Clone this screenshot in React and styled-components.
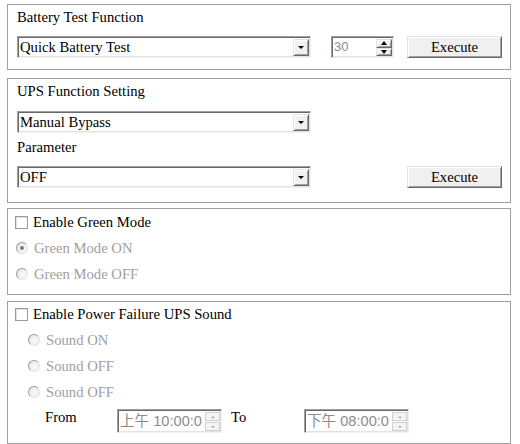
import React from "react";
import styled, { createGlobalStyle } from "styled-components";

const GlobalStyle = createGlobalStyle`
  body {
    margin: 0;
    background: #ffffff;
    font-family: "Liberation Serif", "Times New Roman", serif;
    font-size: 11pt;
    color: #000;
  }
`;

const Page = styled.div`
  width: 504px;
  padding: 4px 0 0 7px;
  display: flex;
  flex-direction: column;
`;

const Panel = styled.div`
  box-sizing: border-box;
  border: 1px solid #a0a0a0;
  margin-top: ${(p) => p.$top || 0}px;
  padding: 0 8px ${(p) => p.$bottom || 0}px ${(p) => p.$left || 9}px;
  display: flex;
  flex-direction: column;
`;

const Title = styled.div`
  height: 24px;
  line-height: 24px;
  margin-bottom: ${(p) => p.$after || 0}px;
  margin-top: ${(p) => p.$before || 0}px;
`;

const Row = styled.div`
  display: flex;
  align-items: center;
  height: 22px;
  justify-content: ${(p) => (p.$spread ? "space-between" : "flex-start")};
`;

const Sunken = styled.div`
  box-sizing: border-box;
  display: flex;
  align-items: stretch;
  border: 1px solid;
  border-color: #a0a0a0 #f0f0f0 #f0f0f0 #a0a0a0;
  box-shadow: inset 1px 1px #696969, inset -1px -1px #e3e3e3;
  background: #fff;
`;

const SelectBox = styled(Sunken)`
  width: 294px;
  height: 22px;
`;

const SelectText = styled.div`
  flex: 1;
  padding-left: 2px;
  line-height: 20px;
  white-space: nowrap;
`;

const RaisedButton = styled.div`
  box-sizing: border-box;
  display: flex;
  align-items: center;
  justify-content: center;
  background: #f0f0f0;
  border: 1px solid;
  border-color: #e3e3e3 #696969 #696969 #e3e3e3;
  box-shadow: inset 1px 1px #ffffff, inset -1px -1px #a0a0a0;
`;

const ArrowButton = styled(RaisedButton)`
  width: 16px;
  margin: 2px 1px 1px 0;
`;

const Triangle = styled.span`
  width: 0;
  height: 0;
  border-left: ${(p) => p.$size || 3}px solid transparent;
  border-right: ${(p) => p.$size || 3}px solid transparent;
  ${(p) => (p.$up ? "border-bottom" : "border-top")}: ${(p) => (p.$size || 3) + 0.5}px solid
    ${(p) => p.$color || "#000"};
`;

const NumberBox = styled(Sunken)`
  width: 63px;
  height: 22px;
  margin-left: 20px;
`;

const ValueText = styled.div`
  flex: 1;
  padding-left: 2px;
  font-family: "Liberation Sans", Arial, "Noto Sans CJK TC", sans-serif;
  font-size: ${(p) => p.$size || 13}px;
  line-height: ${(p) => p.$line || 20}px;
  color: #8c8c8c;
  white-space: nowrap;
  overflow: hidden;
`;

const SpinColumn = styled.div`
  width: ${(p) => p.$width || 16}px;
  margin: 2px 1px 1px 0;
  display: flex;
  flex-direction: column;
  gap: ${(p) => p.$gap || 0}px;
`;

const SpinButton = styled(RaisedButton)`
  flex: 1;
`;

const FaintSpin = styled.div`
  flex: 1;
  box-sizing: border-box;
  display: flex;
  align-items: center;
  justify-content: center;
  background: #f4f4f4;
  border: 1px solid #d0d0d0;
`;

const ExecuteButton = styled(RaisedButton)`
  width: 95px;
  height: 22px;
  margin-left: ${(p) => p.$left || 0}px;
`;

const CheckRow = styled.div`
  display: flex;
  align-items: center;
  height: ${(p) => p.$height || 26}px;
  padding-left: ${(p) => p.$indent || 0}px;
  color: ${(p) => (p.$disabled ? "#a0a0a0" : "#000")};
`;

const CheckBox = styled.span`
  box-sizing: border-box;
  width: 13px;
  height: 13px;
  margin-right: 5px;
  border: 1px solid #9a9a9a;
  background: #fff;
  box-shadow: inset 1px 1px #e0e0e0;
`;

const Radio = styled.span`
  box-sizing: border-box;
  position: relative;
  width: 12px;
  height: 12px;
  margin: 0 6px 0 1px;
  border-radius: 50%;
  border: 1px solid;
  border-color: #9c9c9c #e4e4e4 #e4e4e4 #9c9c9c;
  background: radial-gradient(circle at 60% 60%, #fbfbfb 0, #e8e8e8 75%);

  &::after {
    content: "";
    display: ${(p) => (p.$checked ? "block" : "none")};
    position: absolute;
    left: 3px;
    top: 3px;
    width: 4px;
    height: 4px;
    border-radius: 50%;
    background: #7a7a7a;
  }
`;

const TimeRow = styled.div`
  display: flex;
  align-items: flex-start;
  padding-left: 30px;
`;

const TimeLabel = styled.div`
  width: ${(p) => p.$width}px;
  margin-left: ${(p) => p.$left || 0}px;
  line-height: 24px;
`;

const TimeBox = styled(Sunken)`
  width: 105px;
  height: 24px;
  margin-top: 4px;
`;

const TimeField = ({ value }) => (
  <TimeBox>
    <ValueText $size={14.6} $line={22}>
      {value}
    </ValueText>
    <SpinColumn $width={15} $gap={1}>
      <FaintSpin>
        <Triangle $up $size={2} $color="#a8a8a8" />
      </FaintSpin>
      <FaintSpin>
        <Triangle $size={2} $color="#a8a8a8" />
      </FaintSpin>
    </SpinColumn>
  </TimeBox>
);

const Select = ({ value }) => (
  <SelectBox>
    <SelectText>{value}</SelectText>
    <ArrowButton>
      <Triangle />
    </ArrowButton>
  </SelectBox>
);

const App = () => {
  return (
    <>
      <GlobalStyle />
      <Page>
        <Panel $bottom={11}>
          <Title $after={7}>Battery Test Function</Title>
          <Row>
            <Select value="Quick Battery Test" />
            <NumberBox>
              <ValueText>30</ValueText>
              <SpinColumn>
                <SpinButton>
                  <Triangle $up $size={3.5} />
                </SpinButton>
                <SpinButton>
                  <Triangle $size={3.5} />
                </SpinButton>
              </SpinColumn>
            </NumberBox>
            <ExecuteButton $left={13}>Execute</ExecuteButton>
          </Row>
        </Panel>

        <Panel $top={8} $bottom={14}>
          <Title $after={8}>UPS Function Setting</Title>
          <Row>
            <Select value="Manual Bypass" />
          </Row>
          <Title $before={2} $after={7}>
            Parameter
          </Title>
          <Row $spread>
            <Select value="OFF" />
            <ExecuteButton>Execute</ExecuteButton>
          </Row>
        </Panel>

        <Panel $top={5} $bottom={7} $left={7}>
          <CheckRow>
            <CheckBox />
            Enable Green Mode
          </CheckRow>
          <CheckRow $disabled>
            <Radio $checked />
            Green Mode ON
          </CheckRow>
          <CheckRow $disabled>
            <Radio />
            Green Mode OFF
          </CheckRow>
        </Panel>

        <Panel $top={6} $bottom={10} $left={7}>
          <CheckRow $height={25}>
            <CheckBox />
            Enable Power Failure UPS Sound
          </CheckRow>
          <CheckRow $disabled $indent={12}>
            <Radio />
            Sound ON
          </CheckRow>
          <CheckRow $disabled $indent={12}>
            <Radio />
            Sound OFF
          </CheckRow>
          <CheckRow $disabled $indent={12}>
            <Radio />
            Sound OFF
          </CheckRow>
          <TimeRow>
            <TimeLabel $width={72}>From</TimeLabel>
            <TimeField value="上午 10:00:0" />
            <TimeLabel $width={73} $left={9}>
              To
            </TimeLabel>
            <TimeField value="下午 08:00:0" />
          </TimeRow>
        </Panel>
      </Page>
    </>
  );
};

export default App;
